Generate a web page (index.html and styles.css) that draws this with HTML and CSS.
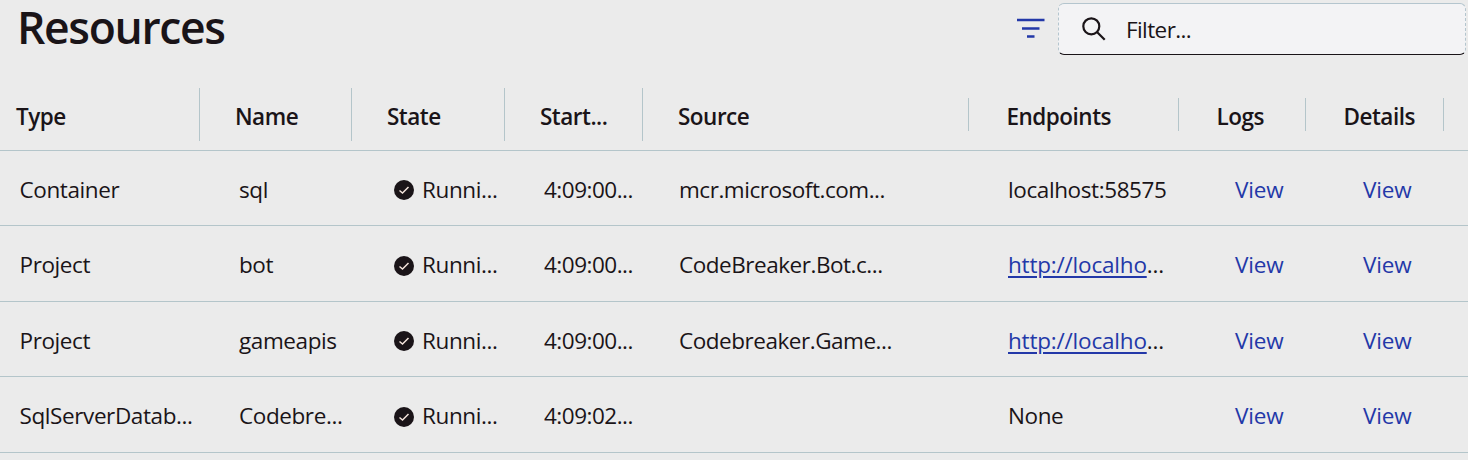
FILE: index.html
```html
<!DOCTYPE html>
<html lang="en">
<head>
<meta charset="utf-8">
<title>Resources</title>
<link rel="stylesheet" href="styles.css">
</head>
<body>
<header class="toolbar">
  <h1 class="title">Resources</h1>
  <svg class="filter-icon" width="28" height="21" viewBox="0 0 28 21"><path d="M0 2H27.500M5 10.500H22.500M10 18.500H17.500" fill="none" stroke="#2338a8" stroke-width="2.600"/></svg>
  <label class="search">
    <svg class="search-icon" width="24" height="24" viewBox="0 0 24 24" fill="none" stroke="#1a1418" stroke-width="2.200"><circle cx="9.300" cy="9.300" r="8"/><path d="M15.200 15.200L22.700 22.700"/></svg>
    <span class="placeholder">Filter...</span>
  </label>
</header>
<main class="table">
  <div class="row head">
    <div class="cell tall"><span>Type</span></div>
    <div class="cell tall"><span>Name</span></div>
    <div class="cell tall"><span>State</span></div>
    <div class="cell tall"><span>Start...</span></div>
    <div class="cell"><span>Source</span></div>
    <div class="cell"><span>Endpoints</span></div>
    <div class="cell"><span>Logs</span></div>
    <div class="cell"><span>Details</span></div>
  </div>
  <div class="row">
    <div class="cell">Container</div>
    <div class="cell">sql</div>
    <div class="cell state"><svg class="check" width="20" height="20" viewBox="0 0 20 20"><circle cx="10" cy="10" r="10" fill="#1a1418"/><path d="M5.500 10.500L8.500 13L14.500 7" fill="none" stroke="#f4e4dc" stroke-width="1.500"/></svg><span>Runni...</span></div>
    <div class="cell time">4:09:00...</div>
    <div class="cell source">mcr.microsoft.com...</div>
    <div class="cell endpoint">localhost:58575</div>
    <div class="cell view"><a>View</a></div>
    <div class="cell view"><a>View</a></div>
  </div>
  <div class="row even">
    <div class="cell">Project</div>
    <div class="cell">bot</div>
    <div class="cell state"><svg class="check" width="20" height="20" viewBox="0 0 20 20"><circle cx="10" cy="10" r="10" fill="#1a1418"/><path d="M5.500 10.500L8.500 13L14.500 7" fill="none" stroke="#f4e4dc" stroke-width="1.500"/></svg><span>Runni...</span></div>
    <div class="cell time">4:09:00...</div>
    <div class="cell source">CodeBreaker.Bot.c...</div>
    <div class="cell endpoint link"><a class="url">http://localho</a>...</div>
    <div class="cell view"><a>View</a></div>
    <div class="cell view"><a>View</a></div>
  </div>
  <div class="row">
    <div class="cell">Project</div>
    <div class="cell">gameapis</div>
    <div class="cell state"><svg class="check" width="20" height="20" viewBox="0 0 20 20"><circle cx="10" cy="10" r="10" fill="#1a1418"/><path d="M5.500 10.500L8.500 13L14.500 7" fill="none" stroke="#f4e4dc" stroke-width="1.500"/></svg><span>Runni...</span></div>
    <div class="cell time">4:09:00...</div>
    <div class="cell source">Codebreaker.Game...</div>
    <div class="cell endpoint link"><a class="url">http://localho</a>...</div>
    <div class="cell view"><a>View</a></div>
    <div class="cell view"><a>View</a></div>
  </div>
  <div class="row even">
    <div class="cell">SqlServerDatab...</div>
    <div class="cell">Codebre...</div>
    <div class="cell state"><svg class="check" width="20" height="20" viewBox="0 0 20 20"><circle cx="10" cy="10" r="10" fill="#1a1418"/><path d="M5.500 10.500L8.500 13L14.500 7" fill="none" stroke="#f4e4dc" stroke-width="1.500"/></svg><span>Runni...</span></div>
    <div class="cell time">4:09:02...</div>
    <div class="cell source"></div>
    <div class="cell endpoint">None</div>
    <div class="cell view"><a>View</a></div>
    <div class="cell view"><a>View</a></div>
  </div>
</main>
</body>
</html>
```
FILE: styles.css
```css
* { box-sizing: border-box; }
body {
  margin: 0;
  background: #ebebeb;
  color: #1a1418;
  font: 22.5px/30px "Open Sans", "Noto Sans", sans-serif;
  letter-spacing: -0.4px;
}
.toolbar { display: flex; height: 78px; padding: 0 2px 0 17px; }
.title {
  margin: 0 auto 0 0;
  font-size: 44.5px;
  line-height: 53px;
  font-weight: 620;
  letter-spacing: -1.35px;
}
.filter-icon { margin: 18px 13px 0 0; }
.search {
  display: flex;
  width: 408px;
  height: 52px;
  margin-top: 3px;
  padding: 13px 0 0 23px;
  background: #f3f3f5;
  border: 1px dashed #b4c5ce;
  border-top-style: solid;
  border-bottom: 1px solid #1a1418;
  border-radius: 6px;
}
.placeholder { margin: -2px 0 0 20px; letter-spacing: -0.6px; }
.row {
  display: grid;
  grid-template-columns: 200px 152px 153px 138px 326px 210px 127px 138px 24px;
  align-items: center;
  height: 75px;
  border-bottom: 1px solid #b4c5ca;
}
.even { height: 76px; }
.cell { padding: 4px 0 0 39px; white-space: nowrap; }
.even .cell { padding-top: 3px; }
.row .cell:first-child { padding-left: 19.500px; }
.row .state { display: flex; align-items: center; padding-left: 42px; }
.state span { margin-left: 8px; }
.even .check { margin-top: 2px; }
.row .time { padding-left: 39px; letter-spacing: -0.5px; }
.row .source { padding-left: 36px; letter-spacing: -0.47px; }
.row .view { padding-left: 56px; letter-spacing: -0.2px; }
.row .view:last-child { padding-left: 57px; }
.link { letter-spacing: -0.2px; }
.head { height: 73px; font-weight: 600; letter-spacing: -0.5px; }
.head .cell {
  display: flex;
  align-items: center;
  height: 33px;
  padding: 6px 0 0 37.500px;
  border-right: 1px solid #b4c5ca;
}
.head .cell:nth-child(-n+5) { padding-left: 35px; }
.head .cell:first-child { padding-left: 16px; }
.head .tall { height: 53px; }
a { color: #2338a8; }
.url { text-decoration: underline; text-decoration-thickness: 2px; text-underline-offset: 3px; }
```
